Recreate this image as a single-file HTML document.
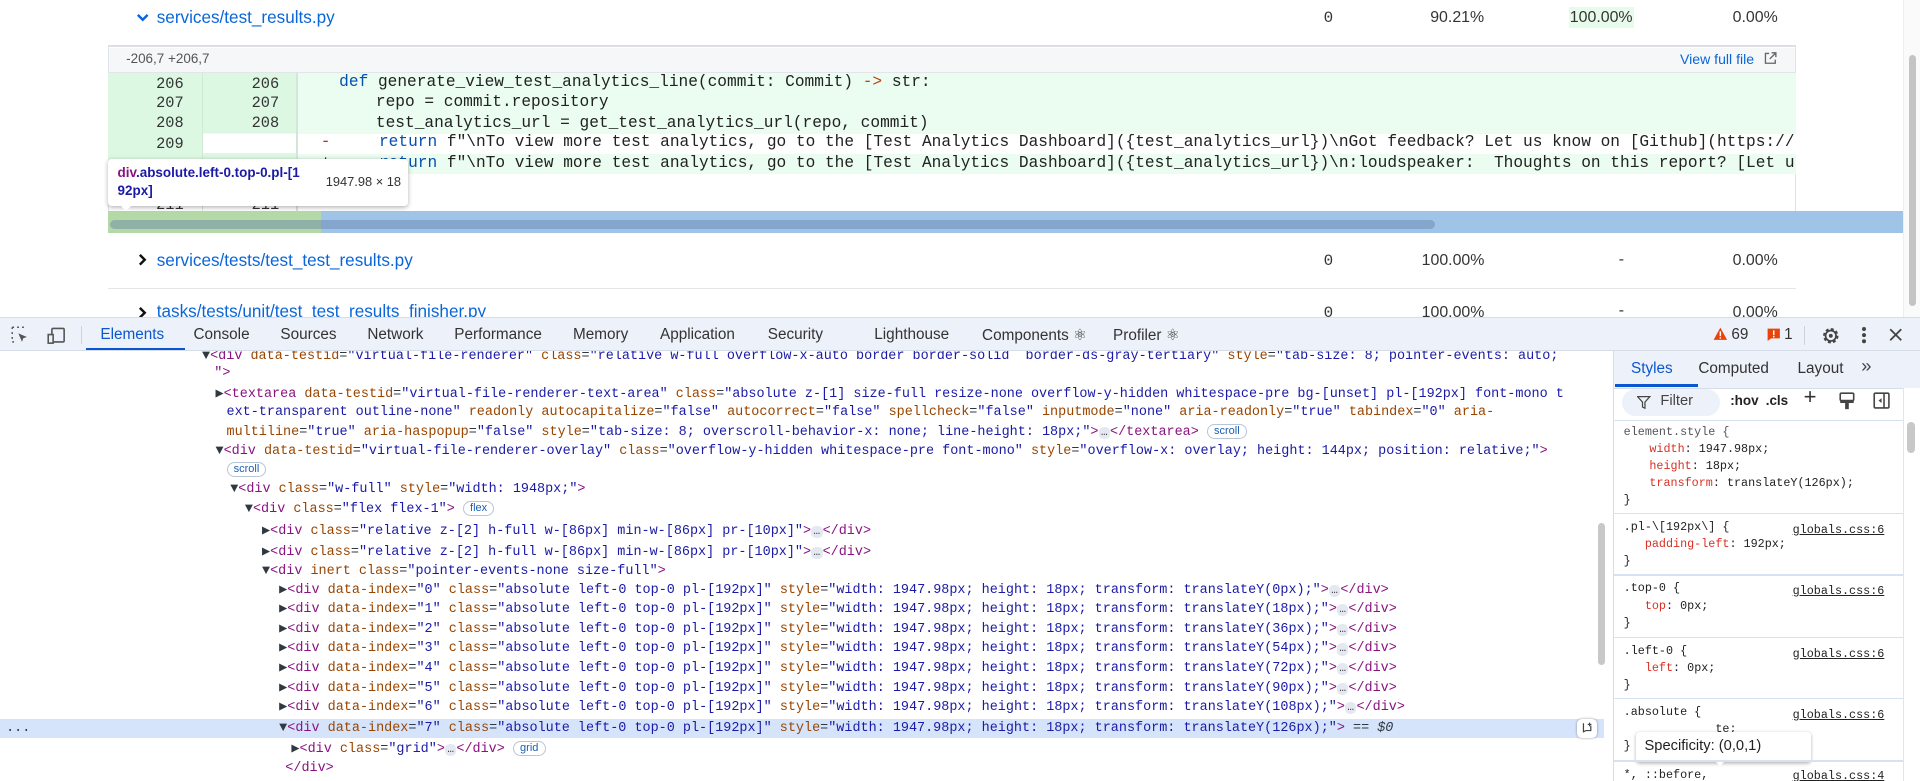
<!DOCTYPE html>
<html><head><meta charset="utf-8">
<style>
html,body{margin:0;padding:0;width:1920px;height:781px;overflow:hidden;background:#fff}
#w{position:relative;width:1568px;height:638px;zoom:1.22449;overflow:hidden;font-family:"Liberation Sans",sans-serif;color:#1f2328}
.a{position:absolute;white-space:pre}
.m{font-family:"Liberation Mono",monospace}
.lnk{color:#0a66d8}
.num{font-size:13px;color:#333}
.code{font-size:13.2px;color:#222}
.row{position:absolute;left:88px;width:1379px;height:16.4px}
.ln{position:absolute;width:70px;text-align:right;font-size:12.5px;color:#333;font-family:"Liberation Mono",monospace;top:1px}
.el{position:absolute;font-family:"Liberation Mono",monospace;font-size:11px;white-space:pre;color:#303942;line-height:14px}
.t{color:#881280}.n{color:#994500}.v{color:#1a1aa6}
.badge{display:inline-block;border:1px solid #b8c4d8;border-radius:8px;font-family:"Liberation Sans",sans-serif;font-size:9px;padding:0 5px;line-height:11px;color:#1a5fb4;vertical-align:1px}
.dots{display:inline-block;background:#e3e8f1;border-radius:4px;font-size:9px;padding:0 2px;line-height:10px;color:#333}
.st{position:absolute;font-family:"Liberation Mono",monospace;font-size:9.6px;white-space:pre;color:#222}
.p{color:#d93025}
.src{position:absolute;left:1464px;text-decoration:underline;font-family:"Liberation Mono",monospace;font-size:9.6px;color:#222}
.sep{position:absolute;left:1318px;width:236px;height:1px;background:#d6e1f2}
</style></head><body><div id="w">

<svg class="a" style="left:111px;top:11px" width="11" height="8"><path d="M1.5 1.5 L5.5 5.5 L9.5 1.5" stroke="#0a66d8" stroke-width="2" fill="none"/></svg>
<div class="a lnk" style="left:128px;top:6px;font-size:14px">services/test_results.py</div>
<div class="a m num" style="left:1081px;top:7px">0</div>
<div class="a num" style="left:1168px;top:7px">90.21%</div>
<div class="a num" style="left:1281px;top:6px;background:#e6fbea;padding:1px 1px">100.00%</div>
<div class="a num" style="left:1415px;top:7px">0.00%</div>

<div class="a" style="left:88px;top:37px;width:1379px;height:153px;border:1px solid #dfe2e6;border-top:2px solid #dcdfe4;box-sizing:border-box"></div>
<div class="a" style="left:89px;top:39px;width:1377px;height:20px;background:#f6f7f9;border-bottom:1px solid #e3e5e8"></div>
<div class="a" style="left:103px;top:42px;font-size:11px;color:#555">-206,7 +206,7</div>
<div class="a lnk" style="left:1372px;top:42px;font-size:11.5px">View full file</div>
<svg class="a" style="left:1440px;top:42px" width="12" height="12"><path d="M5 2H2v8h8V7M7 1.5h3.5V5M10.5 1.5L5.5 6.5" stroke="#666" stroke-width="1.1" fill="none"/></svg>

<div class="row" style="top:60px;background:#eafdf0;border-bottom:1px solid #f4fff7"></div>
<div class="row" style="top:76.4px;background:#eafdf0;border-bottom:1px solid #f4fff7"></div>
<div class="row" style="top:92.8px;background:#eafdf0"></div>
<div class="row" style="top:109.2px;background:#fff"></div>
<div class="row" style="top:125.6px;background:#eafdf0"></div>
<div class="a" style="left:88px;top:60px;width:77px;height:82px;background:#dcf8e2"></div>
<div class="a" style="left:165px;top:60px;width:77px;height:49px;background:#dcf8e2"></div>
<div class="a" style="left:165px;top:125px;width:77px;height:17px;background:#dcf8e2"></div>
<div class="a" style="left:165px;top:60px;width:1px;height:112px;background:#cfe9d5"></div>
<div class="a" style="left:242px;top:60px;width:1px;height:112px;background:#d6e5da"></div>
<div class="ln" style="left:80px;top:61px">206</div><div class="ln" style="left:158px;top:61px">206</div>
<div class="ln" style="left:80px;top:77px">207</div><div class="ln" style="left:158px;top:77px">207</div>
<div class="ln" style="left:80px;top:93px">208</div><div class="ln" style="left:158px;top:93px">208</div>
<div class="ln" style="left:80px;top:110px">209</div>
<div class="ln" style="left:80px;top:160px">211</div><div class="ln" style="left:158px;top:160px">211</div>
<div class="a" style="left:243px;top:58px;width:1222px;height:90px;overflow:hidden">
<div class="a m code" style="left:34px;top:2px"><span style="color:#0550ae">def</span> generate_view_test_analytics_line(commit: Commit) <span style="color:#c2410c">-&gt;</span> str:</div>
<div class="a m code" style="left:64px;top:18px">repo = commit.repository</div>
<div class="a m code" style="left:64px;top:35px">test_analytics_url = get_test_analytics_url(repo, commit)</div>
<div class="a m code" style="left:19px;top:51px"><span style="color:#d1242f">-</span>     <span style="color:#0550ae">return</span> f"\nTo view more test analytics, go to the [Test Analytics Dashboard]({test_analytics_url})\nGot feedback? Let us know on [Github](https://github.c</div>
<div class="a m code" style="left:19px;top:68px">+     <span style="color:#0550ae">return</span> f"\nTo view more test analytics, go to the [Test Analytics Dashboard]({test_analytics_url})\n:loudspeaker:  Thoughts on this report? [Let us know!]</div>
</div>
<div class="a" style="left:88px;top:172px;width:174px;height:18px;background:#b4d8a6"></div>
<div class="a" style="left:262px;top:172px;width:1306px;height:18px;background:#9fc4e7"></div>
<div class="a" style="left:90px;top:180px;width:1082px;height:7px;border-radius:4px;background:rgba(100,130,170,.45)"></div>
<div class="a" style="left:88px;top:130px;width:245px;height:38px;background:#fff;border-radius:3px;box-shadow:0 1px 4px rgba(0,0,0,.3)"></div>
<div class="a" style="left:97px;top:167px;width:0;height:0;border-left:6px solid transparent;border-right:6px solid transparent;border-top:6px solid #fff"></div>
<div class="a" style="left:96px;top:134px;font-size:11px;line-height:15px;font-weight:bold;color:#1a1aa6"><span style="color:#881280">div</span>.absolute.left-0.top-0.pl-[1<br>92px]</div>
<div class="a" style="left:266px;top:142px;font-size:10.5px;color:#333">1947.98 × 18</div>

<svg class="a" style="left:113px;top:207px" width="8" height="11"><path d="M1.5 1.5L5.5 5.5L1.5 9.5" stroke="#111" stroke-width="2" fill="none"/></svg>
<div class="a lnk" style="left:128px;top:204px;font-size:14px">services/tests/test_test_results.py</div>
<div class="a m num" style="left:1081px;top:206px">0</div>
<div class="a num" style="left:1161px;top:206px">100.00%</div>
<div class="a num" style="left:1322px;top:205px">-</div>
<div class="a num" style="left:1415px;top:206px">0.00%</div>
<div class="a" style="left:88px;top:235px;width:1379px;height:1px;background:#e3e5e8"></div>
<svg class="a" style="left:113px;top:250px" width="8" height="11"><path d="M1.5 1.5L5.5 5.5L1.5 9.5" stroke="#111" stroke-width="2" fill="none"/></svg>
<div class="a lnk" style="left:128px;top:246px;font-size:14px">tasks/tests/unit/test_test_results_finisher.py</div>
<div class="a m num" style="left:1081px;top:248px">0</div>
<div class="a num" style="left:1161px;top:248px">100.00%</div>
<div class="a num" style="left:1322px;top:247px">-</div>
<div class="a num" style="left:1415px;top:248px">0.00%</div>
<div class="a" style="left:1554px;top:0;width:14px;height:260px;background:#fafafa;border-left:1px solid #eee"></div>
<div class="a" style="left:1559px;top:45px;width:6px;height:205px;border-radius:3px;background:#c4c4c4"></div>

<div class="a" style="left:0;top:259px;width:1568px;height:28px;background:#edf1f9;border-top:1px solid #d6dde9;border-bottom:1px solid #d6dde9;box-sizing:border-box"></div>
<svg class="a" style="left:9px;top:266px" width="16" height="16"><path d="M1 1h2M5 1h2M9 1h2M1 1v2M1 5v2M1 9v2M1 13h2" stroke="#555" stroke-width="1.2" fill="none" stroke-dasharray="1.5 1.5"/><path d="M6 6l7 3-3 1-1 3z" fill="#555"/></svg>
<svg class="a" style="left:38px;top:266px" width="16" height="16"><rect x="4" y="2" width="10" height="11" rx="1" stroke="#555" stroke-width="1.3" fill="none"/><rect x="1" y="7" width="4" height="7" stroke="#555" stroke-width="1.3" fill="#edf1f9"/></svg>
<div class="a" style="left:66px;top:266px;width:1px;height:15px;background:#cdd3dc"></div>
<div class="a" style="top:266px;left:82px;font-size:12.5px;color:#0b57d0">Elements</div>
<div class="a" style="left:70px;top:284px;width:81px;height:2px;background:#0b57d0"></div>
<div class="a" style="top:266px;left:158px;font-size:12.5px;color:#333">Console</div>
<div class="a" style="top:266px;left:229px;font-size:12.5px;color:#333">Sources</div>
<div class="a" style="top:266px;left:300px;font-size:12.5px;color:#333">Network</div>
<div class="a" style="top:266px;left:371px;font-size:12.5px;color:#333">Performance</div>
<div class="a" style="top:266px;left:468px;font-size:12.5px;color:#333">Memory</div>
<div class="a" style="top:266px;left:539px;font-size:12.5px;color:#333">Application</div>
<div class="a" style="top:266px;left:627px;font-size:12.5px;color:#333">Security</div>
<div class="a" style="top:266px;left:714px;font-size:12.5px;color:#333">Lighthouse</div>
<div class="a" style="top:266px;left:802px;font-size:12.5px;color:#333">Components ⚛</div>
<div class="a" style="top:266px;left:909px;font-size:12.5px;color:#333">Profiler ⚛</div>
<svg class="a" style="left:1399px;top:267px" width="12" height="11"><path d="M6 0.5L11.5 10.5H0.5z" fill="#e8430b"/><rect x="5.4" y="3.5" width="1.2" height="4" fill="#fff"/><rect x="5.4" y="8.3" width="1.2" height="1.2" fill="#fff"/></svg>
<div class="a" style="top:266px;left:1414px;font-size:12.5px;color:#333">69</div>
<svg class="a" style="left:1443px;top:268px" width="11" height="11"><path d="M0.5 0.5h10v8h-7l-3 2z" fill="#e8430b"/><rect x="4.9" y="2" width="1.2" height="3.8" fill="#fff"/><rect x="4.9" y="6.5" width="1.2" height="1.2" fill="#fff"/></svg>
<div class="a" style="top:266px;left:1457px;font-size:12.5px;color:#333">1</div>
<div class="a" style="left:1473px;top:266px;width:1px;height:16px;background:#cdd3dc"></div>
<svg class="a" style="left:1487px;top:266px" width="16" height="16"><circle cx="8" cy="8" r="5" stroke="#444" stroke-width="2.6" fill="none" stroke-dasharray="2.2 1.7"/><circle cx="8" cy="8" r="4.3" stroke="#444" stroke-width="1.4" fill="none"/><circle cx="8" cy="8" r="1.6" fill="#444"/></svg>
<div class="a" style="left:1521px;top:267px;width:3px;height:3px;border-radius:2px;background:#444;box-shadow:0 5px 0 #444,0 10px 0 #444"></div>
<svg class="a" style="left:1543px;top:268px" width="11" height="11"><path d="M1 1L10 10M10 1L1 10" stroke="#444" stroke-width="1.5"/></svg>

<div class="a" style="left:0;top:287px;width:1318px;height:351px;background:#fff;overflow:hidden">
<div class="a" style="left:0;top:300px;width:1310px;height:16px;background:#d6e4fb"></div>
<div class="el" style="left:5px;top:301px">...</div>
<div class="el" style="left:165px;top:-3px">▼<span class="t">&lt;div</span> <span class="n">data-testid</span>=<span class="v">"virtual-file-renderer"</span> <span class="n">class</span>=<span class="v">"relative w-full overflow-x-auto border border-solid  border-ds-gray-tertiary"</span> <span class="n">style</span>=<span class="v">"tab-size: 8; pointer-events: auto;</span></div>
<div class="el" style="left:175px;top:11px"><span class="t">"&gt;</span></div>
<div class="el" style="left:176px;top:28px">▶<span class="t">&lt;textarea</span> <span class="n">data-testid</span>=<span class="v">"virtual-file-renderer-text-area"</span> <span class="n">class</span>=<span class="v">"absolute z-[1] size-full resize-none overflow-y-hidden whitespace-pre bg-[unset] pl-[192px] font-mono t</span></div>
<div class="el" style="left:185px;top:43px"><span class="v">ext-transparent outline-none"</span> <span class="n">readonly autocapitalize</span>=<span class="v">"false"</span> <span class="n">autocorrect</span>=<span class="v">"false"</span> <span class="n">spellcheck</span>=<span class="v">"false"</span> <span class="n">inputmode</span>=<span class="v">"none"</span> <span class="n">aria-readonly</span>=<span class="v">"true"</span> <span class="n">tabindex</span>=<span class="v">"0"</span> <span class="n">aria-</span></div>
<div class="el" style="left:185px;top:59px"><span class="n">multiline</span>=<span class="v">"true"</span> <span class="n">aria-haspopup</span>=<span class="v">"false"</span> <span class="n">style</span>=<span class="v">"tab-size: 8; overscroll-behavior-x: none; line-height: 18px;"</span><span class="t">&gt;</span><span class="dots">…</span><span class="t">&lt;/textarea&gt;</span> <span class="badge">scroll</span></div>
<div class="el" style="left:176px;top:75px">▼<span class="t">&lt;div</span> <span class="n">data-testid</span>=<span class="v">"virtual-file-renderer-overlay"</span> <span class="n">class</span>=<span class="v">"overflow-y-hidden whitespace-pre font-mono"</span> <span class="n">style</span>=<span class="v">"overflow-x: overlay; height: 144px; position: relative;"</span><span class="t">&gt;</span></div>
<div class="el" style="left:185px;top:90px"><span class="badge">scroll</span></div>
<div class="el" style="left:188px;top:106px">▼<span class="t">&lt;div</span> <span class="n">class</span>=<span class="v">"w-full"</span> <span class="n">style</span>=<span class="v">"width: 1948px;"</span><span class="t">&gt;</span></div>
<div class="el" style="left:200px;top:122px">▼<span class="t">&lt;div</span> <span class="n">class</span>=<span class="v">"flex flex-1"</span><span class="t">&gt;</span> <span class="badge">flex</span></div>
<div class="el" style="left:214px;top:140px">▶<span class="t">&lt;div</span> <span class="n">class</span>=<span class="v">"relative z-[2] h-full w-[86px] min-w-[86px] pr-[10px]"</span><span class="t">&gt;</span><span class="dots">…</span><span class="t">&lt;/div&gt;</span></div>
<div class="el" style="left:214px;top:157px">▶<span class="t">&lt;div</span> <span class="n">class</span>=<span class="v">"relative z-[2] h-full w-[86px] min-w-[86px] pr-[10px]"</span><span class="t">&gt;</span><span class="dots">…</span><span class="t">&lt;/div&gt;</span></div>
<div class="el" style="left:214px;top:173px">▼<span class="t">&lt;div</span> <span class="n">inert class</span>=<span class="v">"pointer-events-none size-full"</span><span class="t">&gt;</span></div>
<div class="el" style="left:228px;top:188px">▶<span class="t">&lt;div</span> <span class="n">data-index</span>=<span class="v">"0"</span> <span class="n">class</span>=<span class="v">"absolute left-0 top-0 pl-[192px]"</span> <span class="n">style</span>=<span class="v">"width: 1947.98px; height: 18px; transform: translateY(0px);"</span><span class="t">&gt;</span><span class="dots">…</span><span class="t">&lt;/div&gt;</span></div>
<div class="el" style="left:228px;top:204px">▶<span class="t">&lt;div</span> <span class="n">data-index</span>=<span class="v">"1"</span> <span class="n">class</span>=<span class="v">"absolute left-0 top-0 pl-[192px]"</span> <span class="n">style</span>=<span class="v">"width: 1947.98px; height: 18px; transform: translateY(18px);"</span><span class="t">&gt;</span><span class="dots">…</span><span class="t">&lt;/div&gt;</span></div>
<div class="el" style="left:228px;top:220px">▶<span class="t">&lt;div</span> <span class="n">data-index</span>=<span class="v">"2"</span> <span class="n">class</span>=<span class="v">"absolute left-0 top-0 pl-[192px]"</span> <span class="n">style</span>=<span class="v">"width: 1947.98px; height: 18px; transform: translateY(36px);"</span><span class="t">&gt;</span><span class="dots">…</span><span class="t">&lt;/div&gt;</span></div>
<div class="el" style="left:228px;top:236px">▶<span class="t">&lt;div</span> <span class="n">data-index</span>=<span class="v">"3"</span> <span class="n">class</span>=<span class="v">"absolute left-0 top-0 pl-[192px]"</span> <span class="n">style</span>=<span class="v">"width: 1947.98px; height: 18px; transform: translateY(54px);"</span><span class="t">&gt;</span><span class="dots">…</span><span class="t">&lt;/div&gt;</span></div>
<div class="el" style="left:228px;top:252px">▶<span class="t">&lt;div</span> <span class="n">data-index</span>=<span class="v">"4"</span> <span class="n">class</span>=<span class="v">"absolute left-0 top-0 pl-[192px]"</span> <span class="n">style</span>=<span class="v">"width: 1947.98px; height: 18px; transform: translateY(72px);"</span><span class="t">&gt;</span><span class="dots">…</span><span class="t">&lt;/div&gt;</span></div>
<div class="el" style="left:228px;top:268px">▶<span class="t">&lt;div</span> <span class="n">data-index</span>=<span class="v">"5"</span> <span class="n">class</span>=<span class="v">"absolute left-0 top-0 pl-[192px]"</span> <span class="n">style</span>=<span class="v">"width: 1947.98px; height: 18px; transform: translateY(90px);"</span><span class="t">&gt;</span><span class="dots">…</span><span class="t">&lt;/div&gt;</span></div>
<div class="el" style="left:228px;top:284px">▶<span class="t">&lt;div</span> <span class="n">data-index</span>=<span class="v">"6"</span> <span class="n">class</span>=<span class="v">"absolute left-0 top-0 pl-[192px]"</span> <span class="n">style</span>=<span class="v">"width: 1947.98px; height: 18px; transform: translateY(108px);"</span><span class="t">&gt;</span><span class="dots">…</span><span class="t">&lt;/div&gt;</span></div>
<div class="el" style="left:228px;top:301px">▼<span class="t">&lt;div</span> <span class="n">data-index</span>=<span class="v">"7"</span> <span class="n">class</span>=<span class="v">"absolute left-0 top-0 pl-[192px]"</span> <span class="n">style</span>=<span class="v">"width: 1947.98px; height: 18px; transform: translateY(126px);"</span><span class="t">&gt;</span> == <i>$0</i></div>
<div class="el" style="left:238px;top:318px">▶<span class="t">&lt;div</span> <span class="n">class</span>=<span class="v">"grid"</span><span class="t">&gt;</span><span class="dots">…</span><span class="t">&lt;/div&gt;</span> <span class="badge">grid</span></div>
<div class="el" style="left:233px;top:334px"><span class="t">&lt;/div&gt;</span></div>
<div class="a" style="left:1288px;top:300px;width:16px;height:16px;border-radius:4px;background:#fff;box-shadow:0 0 2px rgba(0,0,0,.4)"></div>
<svg class="a" style="left:1291px;top:303px" width="10" height="10"><path d="M2 1v7l2-1h4V3M7 0.5v3M5.5 2h3" stroke="#444" stroke-width="1" fill="none"/></svg>
<div class="a" style="left:1305px;top:140px;width:6px;height:116px;border-radius:3px;background:#c8c8c8"></div>
</div>
<div class="a" style="left:1317px;top:287px;width:1px;height:351px;background:#d6dde9"></div>

<div class="a" style="left:1318px;top:287px;width:250px;height:30px;background:#edf1f9;border-bottom:1px solid #d6dde9"></div>
<div class="a" style="left:1332px;top:294px;font-size:12.5px;color:#0b57d0">Styles</div>
<div class="a" style="left:1319px;top:314px;width:68px;height:2px;background:#0b57d0"></div>
<div class="a" style="left:1387px;top:294px;font-size:12.5px;color:#333">Computed</div>
<div class="a" style="left:1468px;top:294px;font-size:12.5px;color:#333">Layout</div>
<div class="a" style="left:1520px;top:290px;font-size:15px;color:#444">»</div>
<div class="a" style="left:1325px;top:318px;width:80px;height:22px;border-radius:11px;background:#edf1f9"></div>
<svg class="a" style="left:1337px;top:323px" width="11" height="11"><path d="M0.5 0.5h10L6.5 5v5l-2-1V5z" stroke="#444" stroke-width="1" fill="none"/></svg>
<div class="a" style="left:1356px;top:321px;font-size:12px;color:#444">Filter</div>
<div class="a" style="left:1413px;top:321px;font-size:11px;color:#222;font-weight:bold">:hov</div>
<div class="a" style="left:1442px;top:321px;font-size:11px;color:#222;font-weight:bold">.cls</div>
<div class="a" style="left:1473px;top:314px;font-size:18px;color:#333">+</div>
<svg class="a" style="left:1502px;top:320px" width="13" height="15"><rect x="1" y="1" width="11" height="6" rx="1" stroke="#444" stroke-width="1.3" fill="none"/><rect x="1" y="7" width="11" height="2" fill="#444"/><rect x="5" y="9" width="3" height="5" fill="#444"/></svg>
<svg class="a" style="left:1530px;top:320px" width="14" height="14"><rect x="1" y="1" width="12" height="12" rx="1" stroke="#444" stroke-width="1.3" fill="none"/><path d="M9 1v12" stroke="#444" stroke-width="1.3"/><path d="M7 5L4.5 7L7 9z" fill="#444"/></svg>
<div class="sep" style="top:343px"></div>
<div class="st" style="left:1326px;top:346px;line-height:14px;color:#555">element.style {</div>
<div class="st" style="left:1347px;top:360px;line-height:14px"><span class="p">width</span>: 1947.98px;
<span class="p">height</span>: 18px;
<span class="p">transform</span>: translateY(126px);</div>
<div class="st" style="left:1326px;top:402px;line-height:14px">}</div>
<div class="sep" style="top:419px"></div>
<div class="st" style="left:1326px;top:424px;line-height:14px">.pl-\[192px\] {
   <span class="p">padding-left</span>: 192px;
}</div>
<div class="src" style="top:427px">globals.css:6</div>
<div class="sep" style="top:469px"></div>
<div class="st" style="left:1326px;top:474px;line-height:14px">.top-0 {
   <span class="p">top</span>: 0px;
}</div>
<div class="src" style="top:477px">globals.css:6</div>
<div class="sep" style="top:520px"></div>
<div class="st" style="left:1326px;top:525px;line-height:14px">.left-0 {
   <span class="p">left</span>: 0px;
}</div>
<div class="src" style="top:528px">globals.css:6</div>
<div class="sep" style="top:570px"></div>
<div class="st" style="left:1326px;top:575px;line-height:14px">.absolute {
             te;
}</div>
<div class="src" style="top:578px">globals.css:6</div>
<div class="a" style="left:1336px;top:598px;width:143px;height:24px;background:#fff;border-radius:3px;box-shadow:0 1px 3px rgba(0,0,0,.3)"></div>
<div class="a" style="left:1400px;top:621px;width:0;height:0;border-left:5px solid transparent;border-right:5px solid transparent;border-top:5px solid #fff"></div>
<div class="a" style="left:1343px;top:603px;font-size:12px;color:#222">Specificity: (0,0,1)</div>
<div class="sep" style="top:621px"></div>
<div class="st" style="left:1326px;top:626px;line-height:14px">*, ::before,</div>
<div class="src" style="top:628px">globals.css:4</div>
<div class="a" style="left:1554px;top:317px;width:14px;height:321px;background:#fff;border-left:1px solid #e4e4e4"></div>
<div class="a" style="left:1557px;top:345px;width:7px;height:25px;border-radius:4px;background:#c8c8c8"></div>
</div></body></html>
